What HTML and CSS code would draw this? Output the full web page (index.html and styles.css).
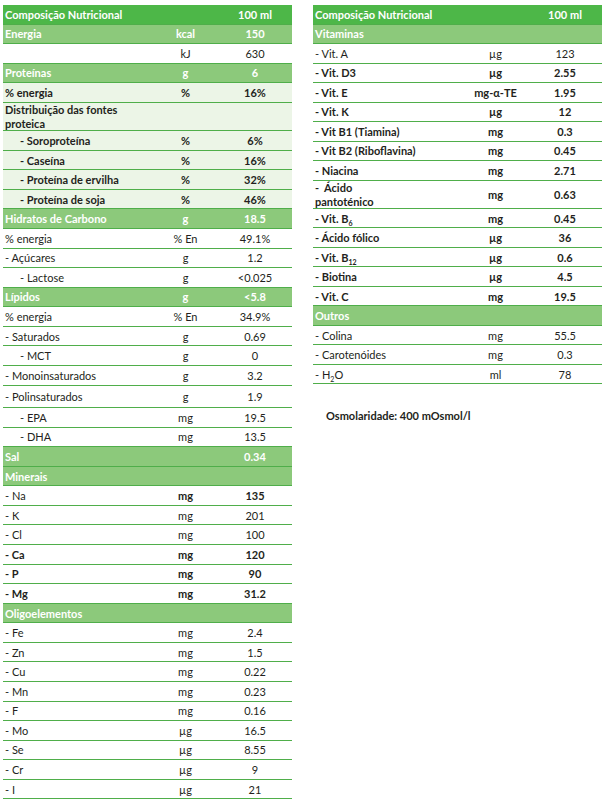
FILE: index.html
```html
<!DOCTYPE html>
<html lang="pt">
<head>
<meta charset="utf-8">
<title>Composição Nutricional</title>
<link rel="stylesheet" href="styles.css">
</head>
<body>
<div class="page">
  <div class="nt left">
    <div class="row head"><span class="c1">Composição Nutricional</span><span class="c2"></span><span class="c3">100 ml</span></div>
    <div class="row sec"><span class="c1">Energia</span><span class="c2">kcal</span><span class="c3">150</span></div>
    <div class="row"><span class="c1"></span><span class="c2">kJ</span><span class="c3">630</span></div>
    <div class="row sec"><span class="c1">Proteínas</span><span class="c2">g</span><span class="c3">6</span></div>
    <div class="row tint"><span class="c1">% energia</span><span class="c2">%</span><span class="c3">16%</span></div>
    <div class="row tint dbl"><span class="c1">Distribuição das fontes proteica</span><span class="c2"></span><span class="c3"></span></div>
    <div class="row tint"><span class="c1 ind">- Soroproteína</span><span class="c2">%</span><span class="c3">6%</span></div>
    <div class="row tint"><span class="c1 ind">- Caseína</span><span class="c2">%</span><span class="c3">16%</span></div>
    <div class="row tint"><span class="c1 ind">- Proteína de ervilha</span><span class="c2">%</span><span class="c3">32%</span></div>
    <div class="row tint"><span class="c1 ind">- Proteína de soja</span><span class="c2">%</span><span class="c3">46%</span></div>
    <div class="row sec"><span class="c1">Hidratos de Carbono</span><span class="c2">g</span><span class="c3">18.5</span></div>
    <div class="row"><span class="c1">% energia</span><span class="c2">% En</span><span class="c3">49.1%</span></div>
    <div class="row"><span class="c1">- Açúcares</span><span class="c2">g</span><span class="c3">1.2</span></div>
    <div class="row"><span class="c1 ind">- Lactose</span><span class="c2">g</span><span class="c3">&lt;0.025</span></div>
    <div class="row sec"><span class="c1">Lípidos</span><span class="c2">g</span><span class="c3">&lt;5.8</span></div>
    <div class="row"><span class="c1">% energia</span><span class="c2">% En</span><span class="c3">34.9%</span></div>
    <div class="row"><span class="c1">- Saturados</span><span class="c2">g</span><span class="c3">0.69</span></div>
    <div class="row"><span class="c1 ind">- MCT</span><span class="c2">g</span><span class="c3">0</span></div>
    <div class="row"><span class="c1">- Monoinsaturados</span><span class="c2">g</span><span class="c3">3.2</span></div>
    <div class="row tall"><span class="c1">- Polinsaturados</span><span class="c2">g</span><span class="c3">1.9</span></div>
    <div class="row"><span class="c1 ind">- EPA</span><span class="c2">mg</span><span class="c3">19.5</span></div>
    <div class="row"><span class="c1 ind">- DHA</span><span class="c2">mg</span><span class="c3">13.5</span></div>
    <div class="row sec"><span class="c1">Sal</span><span class="c2"></span><span class="c3">0.34</span></div>
    <div class="row sec"><span class="c1">Minerais</span><span class="c2"></span><span class="c3"></span></div>
    <div class="row"><span class="c1">- Na</span><span class="c2 b">mg</span><span class="c3 b">135</span></div>
    <div class="row"><span class="c1">- K</span><span class="c2">mg</span><span class="c3">201</span></div>
    <div class="row"><span class="c1">- Cl</span><span class="c2">mg</span><span class="c3">100</span></div>
    <div class="row b"><span class="c1">- Ca</span><span class="c2">mg</span><span class="c3">120</span></div>
    <div class="row b"><span class="c1">- P</span><span class="c2">mg</span><span class="c3">90</span></div>
    <div class="row b"><span class="c1">- Mg</span><span class="c2">mg</span><span class="c3">31.2</span></div>
    <div class="row sec"><span class="c1">Oligoelementos</span><span class="c2"></span><span class="c3"></span></div>
    <div class="row"><span class="c1">- Fe</span><span class="c2">mg</span><span class="c3">2.4</span></div>
    <div class="row"><span class="c1">- Zn</span><span class="c2">mg</span><span class="c3">1.5</span></div>
    <div class="row"><span class="c1">- Cu</span><span class="c2">mg</span><span class="c3">0.22</span></div>
    <div class="row"><span class="c1">- Mn</span><span class="c2">mg</span><span class="c3">0.23</span></div>
    <div class="row"><span class="c1">- F</span><span class="c2">mg</span><span class="c3">0.16</span></div>
    <div class="row"><span class="c1">- Mo</span><span class="c2">µg</span><span class="c3">16.5</span></div>
    <div class="row"><span class="c1">- Se</span><span class="c2">µg</span><span class="c3">8.55</span></div>
    <div class="row"><span class="c1">- Cr</span><span class="c2">µg</span><span class="c3">9</span></div>
    <div class="row"><span class="c1">- I</span><span class="c2">µg</span><span class="c3">21</span></div>
  </div>

  <div class="col-right">
    <div class="nt right">
      <div class="row head"><span class="c1">Composição Nutricional</span><span class="c2"></span><span class="c3">100 ml</span></div>
      <div class="row sec"><span class="c1">Vitaminas</span><span class="c2"></span><span class="c3"></span></div>
      <div class="row"><span class="c1">- Vit. A</span><span class="c2">µg</span><span class="c3">123</span></div>
      <div class="row b"><span class="c1">- Vit. D3</span><span class="c2">µg</span><span class="c3">2.55</span></div>
      <div class="row b"><span class="c1">- Vit. E</span><span class="c2">mg-α-TE</span><span class="c3">1.95</span></div>
      <div class="row b"><span class="c1">- Vit. K</span><span class="c2">µg</span><span class="c3">12</span></div>
      <div class="row b"><span class="c1">- Vit B1 (Tiamina)</span><span class="c2">mg</span><span class="c3">0.3</span></div>
      <div class="row b"><span class="c1">- Vit B2 (Riboflavina)</span><span class="c2">mg</span><span class="c3">0.45</span></div>
      <div class="row b"><span class="c1">- Niacina</span><span class="c2">mg</span><span class="c3">2.71</span></div>
      <div class="row b dbl"><span class="c1">-&nbsp; Ácido<br>pantoténico</span><span class="c2">mg</span><span class="c3">0.63</span></div>
      <div class="row b"><span class="c1">- Vit. B<sub>6</sub></span><span class="c2">mg</span><span class="c3">0.45</span></div>
      <div class="row b"><span class="c1">- Ácido fólico</span><span class="c2">µg</span><span class="c3">36</span></div>
      <div class="row b"><span class="c1">- Vit. B<sub>12</sub></span><span class="c2">µg</span><span class="c3">0.6</span></div>
      <div class="row b"><span class="c1">- Biotina</span><span class="c2">µg</span><span class="c3">4.5</span></div>
      <div class="row b"><span class="c1">- Vit. C</span><span class="c2">mg</span><span class="c3">19.5</span></div>
      <div class="row sec"><span class="c1">Outros</span><span class="c2"></span><span class="c3"></span></div>
      <div class="row"><span class="c1">- Colina</span><span class="c2">mg</span><span class="c3">55.5</span></div>
      <div class="row"><span class="c1">- Carotenóides</span><span class="c2">mg</span><span class="c3">0.3</span></div>
      <div class="row"><span class="c1">- H<sub>2</sub>O</span><span class="c2">ml</span><span class="c3">78</span></div>
    </div>
    <p class="osm">Osmolaridade: 400 mOsmol/l</p>
  </div>
</div>
</body>
</html>
```

FILE: styles.css
```css
* {
  box-sizing: border-box;
}

body {
  margin: 0;
  background: #ffffff;
  color: #231f20;
  font-family: Lato, "Liberation Sans", sans-serif;
  font-size: 11px;
}

.page {
  display: flex;
  align-items: flex-start;
  gap: 21px;
  padding: 5px 0 0 3px;
}

.nt {
  width: 289px;
}

.row {
  display: grid;
  grid-template-columns: 150px 65px 74px;
  align-items: center;
  height: 19.57px;
  border-bottom: 1px solid #4fae4a;
  line-height: 13px;
}

.right .row {
  height: 19.5px;
}

.row > span {
  white-space: nowrap;
}

.c1 {
  padding-left: 2px;
}

.c2,
.c3 {
  text-align: center;
}

.ind {
  padding-left: 17px;
}

.head {
  background: #4db748;
  color: #ffffff;
  font-weight: 700;
}

.sec {
  background: #8cc97b;
  color: #ffffff;
  font-weight: 700;
}

.tint {
  background: #ecf5e7;
  font-weight: 700;
}

.b {
  font-weight: 700;
}

.left .tall {
  height: 22.6px;
}

.nt .dbl {
  height: 28.4px;
  line-height: 14px;
}

.dbl > .c1 {
  white-space: normal;
}

sub {
  font-size: 7px;
  line-height: 0;
  vertical-align: -3px;
}

.osm {
  margin: 25px 0 0 13px;
  font-weight: 700;
}
```
